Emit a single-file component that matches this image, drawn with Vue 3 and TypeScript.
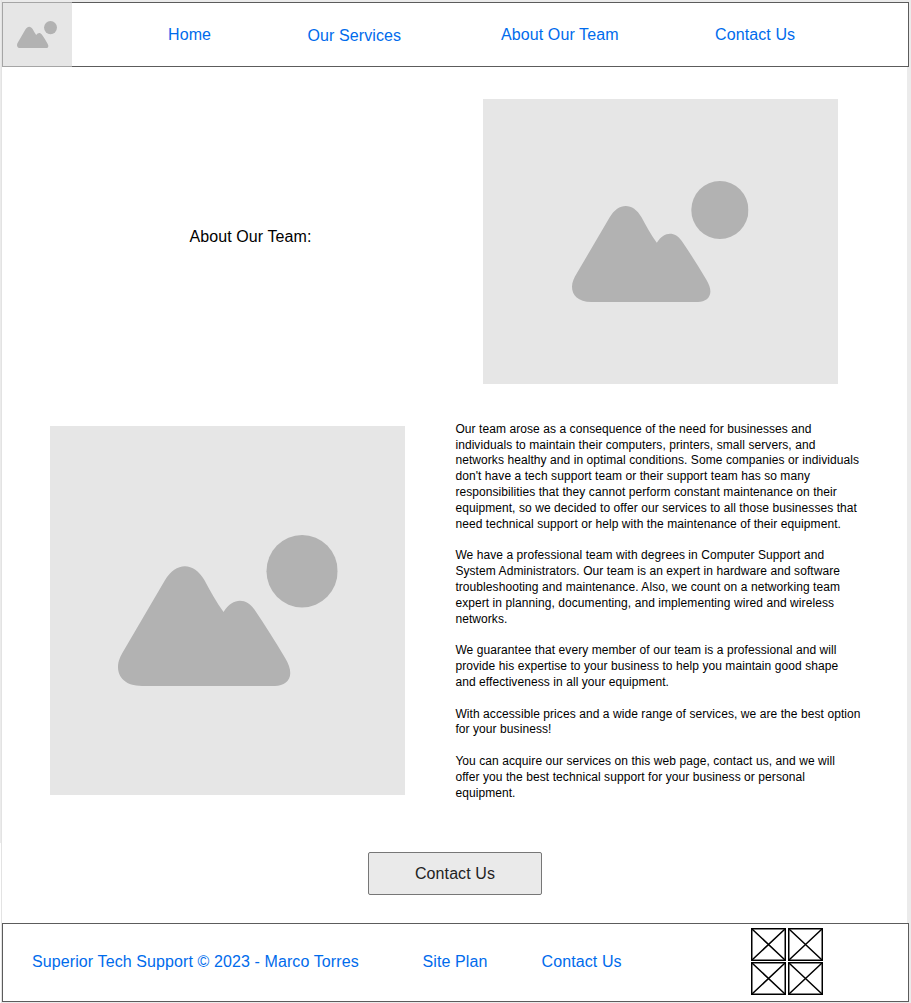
<script setup lang="ts">
interface NavLink { label: string; cls: string }

const navLinks: NavLink[] = [
  { label: 'Home', cls: 'home' },
  { label: 'Our Services', cls: 'services' },
  { label: 'About Our Team', cls: 'about' },
  { label: 'Contact Us', cls: 'contact' },
]

const paragraphs: string[][] = [
  [
    'Our team arose as a consequence of the need for businesses and',
    'individuals to maintain their computers, printers, small servers, and',
    'networks healthy and in optimal conditions. Some companies or individuals',
    "don't have a tech support team or their support team has so many",
    'responsibilities that they cannot perform constant maintenance on their',
    'equipment, so we decided to offer our services to all those businesses that',
    'need technical support or help with the maintenance of their equipment.',
  ],
  [
    'We have a professional team with degrees in Computer Support and',
    'System Administrators. Our team is an expert in hardware and software',
    'troubleshooting and maintenance. Also, we count on a networking team',
    'expert in planning, documenting, and implementing wired and wireless',
    'networks.',
  ],
  [
    'We guarantee that every member of our team is a professional and will',
    'provide his expertise to your business to help you maintain good shape',
    'and effectiveness in all your equipment.',
  ],
  [
    'With accessible prices and a wide range of services, we are the best option',
    'for your business!',
  ],
  [
    'You can acquire our services on this web page, contact us, and we will',
    'offer you the best technical support for your business or personal',
    'equipment.',
  ],
]
</script>

<template>
  <svg class="defs" width="0" height="0" aria-hidden="true">
    <symbol id="landscape" viewBox="0 0 176.5 121" preserveAspectRatio="none">
      <path d="M19.4 120.9C6 120.9 0 114 0 105.7C0 101 2 97 5 92L37.7 36.3C46.5 21.2 61 21.2 69.5 36.3C74.5 45.5 79 54 84.8 61.7C92 50 103 50 109.6 59.7C118 72 126.5 85.5 134.4 98.7C137 103 138.4 107 138.4 110.5C138.4 117 133 120.9 126 120.9Z" />
      <ellipse cx="147.9" cy="29" rx="28.6" ry="29" />
    </symbol>
  </svg>
  <div class="page">
    <header class="header">
      <div class="placeholder logo"><svg class="pic"><use href="#landscape" /></svg></div>
      <nav class="nav">
        <a v-for="link in navLinks" :key="link.label" :class="link.cls">{{ link.label }}</a>
      </nav>
    </header>
    <main class="main">
      <h1 class="title">About Our Team:</h1>
      <div class="placeholder hero"><svg class="pic"><use href="#landscape" /></svg></div>
      <div class="placeholder team"><svg class="pic"><use href="#landscape" /></svg></div>
      <div class="copy">
        <p v-for="(lines, i) in paragraphs" :key="i">
          <span v-for="line in lines" :key="line" class="line">{{ line }}</span>
        </p>
      </div>
    </main>
    <button class="cta">Contact Us</button>
    <footer class="footer">
      <a class="copyright">Superior Tech Support © 2023 - Marco Torres</a>
      <a class="site">Site Plan</a>
      <a class="foot-contact">Contact Us</a>
      <div class="socials">
        <svg v-for="n in 4" :key="n" width="35" height="33" viewBox="0 0 35 33">
          <path d="M1 1L34 32M34 1L1 32" stroke="#000" stroke-width="1.5" fill="none" />
          <rect x="0.75" y="0.75" width="33.5" height="31.5" fill="none" stroke="#000" stroke-width="1.5" />
        </svg>
      </div>
    </footer>
  </div>
</template>

<style>
body { margin: 0; background: #ebebeb; }
</style>

<style scoped>
.defs { position: absolute; }
.page {
  box-sizing: border-box;
  width: 911px;
  height: 1003px;
  padding: 2px 2px 0 2px;
  overflow: hidden;
  background: linear-gradient(#fff, #fff) 2px 2px / 905px 1000px no-repeat,
    linear-gradient(#fff, #fff) 0 843px / 1px 160px no-repeat,
    linear-gradient(#e3e3e3, #e3e3e3) 1px 0 / 1px 1003px no-repeat, #ebebeb;
  font-family: "Liberation Sans", Arial, sans-serif;
  font-size: 16px;
  letter-spacing: 0.1px;
}
.header, .footer {
  box-sizing: border-box;
  width: 907px;
  border: 1px solid #5c5c5c;
  background: #fff;
  display: flex;
}
.header { height: 65px; }
.placeholder {
  display: flex;
  align-items: center;
  justify-content: center;
  background: #e6e6e6;
  fill: #b2b2b2;
}
.logo {
  box-sizing: border-box;
  width: 70px;
  height: 65px;
  margin: -1px 0 0 -1px;
  border: 1px solid #a5a5a5;
  border-right: 0;
  flex: none;
}
.logo .pic { width: 40px; height: 27.5px; margin-right: 1px; }
.nav { display: flex; line-height: 18px; padding-top: 23px; }
a { color: #006bec; white-space: nowrap; flex: none; }
.home { margin-left: 96px; width: 139.5px; }
.services { width: 193.5px; padding-top: 1px; }
.about { width: 214px; }
.main {
  display: grid;
  grid-template-columns: 355px 410px;
  grid-template-rows: 285px 369px;
  column-gap: 50px;
  row-gap: 42.4px;
  padding: 32px 0 0 48.4px;
}
.title {
  margin: 128.5px 0 0 139px;
  font-size: 16px;
  line-height: 18px;
  font-weight: 400;
  color: #000;
}
.hero { width: 355px; height: 285px; margin-left: 27.6px; }
.hero .pic { width: 176.5px; height: 121px; }
.team .pic { width: 219.7px; height: 151px; }
.copy {
  font-size: 12px;
  line-height: 15.83px;
  letter-spacing: 0.075px;
  color: #000;
  margin-top: -4.7px;
}
.copy p { margin: 0 0 15.83px; }
.line { display: block; white-space: nowrap; }
.cta {
  display: block;
  box-sizing: border-box;
  width: 174px;
  height: 43px;
  margin: 56.6px 0 0 366px;
  padding: 1px 0 0;
  border: 1px solid #777;
  border-radius: 2px;
  background: #eaeaea;
  color: #222;
  font: 16px "Liberation Sans", Arial, sans-serif;
  letter-spacing: 0.09px;
}
.footer { height: 79px; margin-top: 28px; line-height: 18px; }
.footer a { padding-top: 29px; }
.copyright { margin-left: 29px; width: 390.5px; }
.site { width: 119px; }
.foot-contact { width: 209.5px; }
.socials {
  display: grid;
  grid-template-columns: 35px 35px;
  grid-template-rows: 33px 33px;
  column-gap: 2px;
  row-gap: 1px;
  margin-top: 4.4px;
}
.socials svg { display: block; }
</style>
